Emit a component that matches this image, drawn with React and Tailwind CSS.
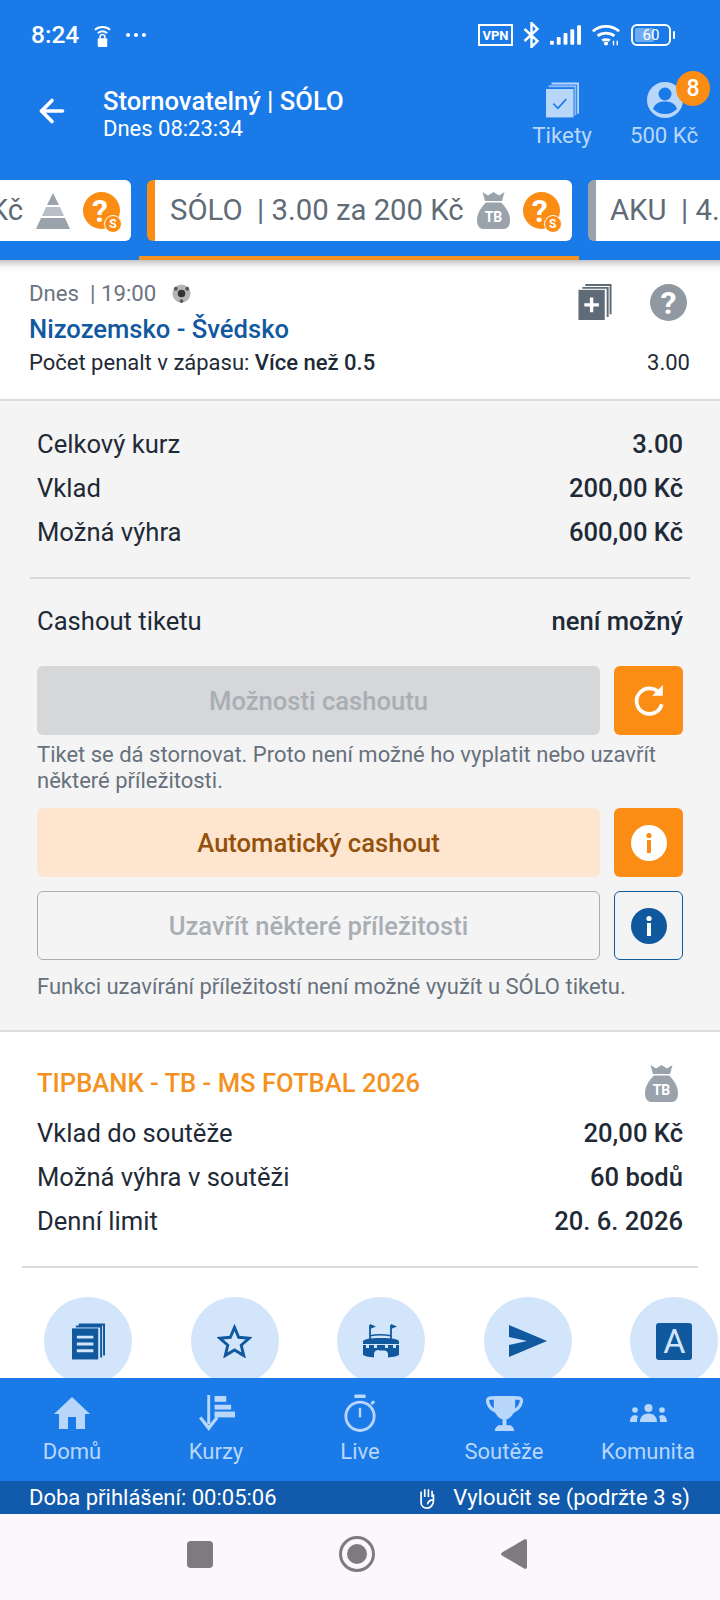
import { ArrowLeft } from "lucide-react";

const font = { fontFamily: "Roboto, sans-serif" };

function MoneyBag({ className }) {
  return (
    <svg viewBox="0 0 33 37" className={className}>
      <path d="M5.500 0l5.500 3.500L16.500 0 22 3.500 27.500 0 25 9H8z" fill="currentColor" />
      <path d="M9 10.500h15c3 3 9 9 9 18 0 6-3 8.500-7 8.500H7c-4 0-7-2.500-7-8.500 0-9 6-15 9-18z" fill="currentColor" />
      <text x="16.500" y="30" textAnchor="middle" fontSize="14" fontWeight="700" fill="#fff" fontFamily="Roboto, sans-serif">TB</text>
    </svg>
  );
}

function HelpCoin() {
  return (
    <div className="relative flex h-[37px] w-[37px] shrink-0 items-center justify-center rounded-full bg-[#fb8c14] pr-[3px] text-[32px] font-bold leading-none text-white">
      ?
      <span className="absolute -bottom-[4px] -right-[2px] flex h-[18px] w-[18px] items-center justify-center rounded-full border border-white bg-[#fb8c14] text-[12px] font-bold leading-none text-white">S</span>
    </div>
  );
}

function InfoDot({ bg, fg }) {
  return (
    <svg viewBox="0 0 36 36" className="h-[36px] w-[36px]">
      <circle cx="18" cy="18" r="18" fill={bg} />
      <circle cx="18" cy="10.500" r="2.600" fill={fg} />
      <rect x="16" y="15" width="4" height="13" fill={fg} />
    </svg>
  );
}

function StatusBar() {
  return (
    <div className="flex h-[70px] shrink-0 items-center justify-between pl-[31px] pr-[45px] text-white">
      <div className="flex items-center gap-[14px]">
        <span className="text-[24.500px] font-medium leading-none">8:24</span>
        <svg viewBox="0 0 20 24" className="h-[23px] w-[19px]" fill="none" stroke="currentColor" strokeWidth="2">
          <path d="M2 6c4-4 12-4 16 0M5 9.500c3-2.500 7-2.500 10 0" />
          <rect x="5" y="15" width="10" height="9" rx="1" fill="currentColor" stroke="none" />
          <path d="M7.500 15v-1.500a2.500 2.500 0 0 1 5 0V15" strokeWidth="1.600" />
        </svg>
        <span className="flex gap-[4px]">
          <i className="h-[4px] w-[4px] rounded-full bg-white" />
          <i className="h-[4px] w-[4px] rounded-full bg-white" />
          <i className="h-[4px] w-[4px] rounded-full bg-white" />
        </span>
      </div>
      <div className="flex items-center gap-[10px]">
        <span className="flex h-[22px] w-[35px] items-center justify-center border-2 border-white text-[13px] font-bold leading-none">VPN</span>
        <svg viewBox="0 0 16 26" className="h-[26px] w-[17px]" fill="none" stroke="currentColor" strokeWidth="2.400">
          <path d="M1 7l13 12-6 6V1l6 6L1 19" />
        </svg>
        <svg viewBox="0 0 32 22" className="h-[22px] w-[31px]" fill="currentColor">
          <rect x="0" y="17" width="4" height="4" rx="1" />
          <rect x="7" y="13" width="4" height="8" rx="1" />
          <rect x="14" y="9" width="4" height="12" rx="1" />
          <rect x="21" y="5" width="4" height="16" rx="1" />
          <rect x="28" y="1" width="4" height="20" rx="1" />
        </svg>
        <svg viewBox="0 0 32 24" className="h-[24px] w-[30px]" fill="none" stroke="currentColor" strokeWidth="3">
          <path d="M2 8c8-7 20-7 28 0M7 13c5-4 13-4 18 0M12 18c2-1.500 6-1.500 8 0" />
          <circle cx="16" cy="21" r="2.200" fill="currentColor" stroke="none" />
          <path d="M24 18v5M28 18v5" strokeWidth="1.500" />
        </svg>
        <div className="flex items-center gap-[2px]">
          <div className="relative flex h-[22px] w-[40px] items-center justify-center overflow-hidden rounded-[6px] border-2 border-white text-[15px] leading-none">
            <span className="absolute inset-y-[2px] left-[2px] w-[19px] rounded-[2px] bg-[#a6cdf8]/60" />
            <span className="relative">60</span>
          </div>
          <i className="h-[8px] w-[2px] rounded-full bg-white" />
        </div>
      </div>
    </div>
  );
}

function Header() {
  return (
    <div className="flex h-[96px] shrink-0 items-start pl-[34px] pr-[20px] text-white">
      <ArrowLeft className="mt-[23px] h-[36px] w-[36px]" strokeWidth={2.400} />
      <div className="ml-[33px] mt-[17px] flex-1">
        <div className="text-[25.600px] font-medium leading-[28px]">Stornovatelný | SÓLO</div>
        <div className="text-[22px] leading-[28px]">Dnes 08:23:34</div>
      </div>
      <div className="flex w-[72px] flex-col items-center text-[#b9d7fb]">
        <svg viewBox="0 0 36 38" className="mt-[12px] h-[36px] w-[33px]">
          <path d="M6 0h30v34h-2V2H6z" fill="currentColor" />
          <path d="M3 3h30v33h-2V5H3z" fill="currentColor" opacity=".7" />
          <rect x="0" y="7" width="30" height="31" fill="currentColor" />
          <path d="M8 23l5 5 9-10" stroke="#1a7ae8" strokeWidth="1.800" fill="none" />
        </svg>
        <span className="mt-[3px] text-[22.400px] leading-[28px]">Tikety</span>
      </div>
      <div className="relative ml-[30px] flex w-[72px] flex-col items-center text-[#b9d7fb]">
        <svg viewBox="0 0 36 36" className="ml-[2px] mt-[12px] h-[36px] w-[36px]">
          <circle cx="18" cy="18" r="18" fill="currentColor" />
          <circle cx="18" cy="12" r="6.500" fill="#1a7ae8" />
          <path d="M6 27c2-6 7-7.500 12-7.500s10 1.500 12 7.500c-3 3-7 5-12 5s-9-2-12-5z" fill="#1a7ae8" />
        </svg>
        <span className="absolute left-[48px] top-[1px] flex h-[35px] w-[34px] items-center justify-center rounded-full bg-[#fb8c14] text-[23px] font-medium leading-none text-white">8</span>
        <span className="mt-[3px] text-[22.200px] leading-[28px]">500 Kč</span>
      </div>
    </div>
  );
}

function Tabs() {
  return (
    <div className="flex h-[94px] shrink-0 items-start gap-[16px] overflow-hidden">
      <div className="mt-[14px] flex h-[61px] w-[131px] shrink-0 items-center justify-end gap-[12px] overflow-hidden rounded-r-[6px] bg-white pr-[11px] text-[29.300px] leading-none text-[#5f6b76]">
        <span className="shrink-0">Kč</span>
        <svg viewBox="0 0 36 36" className="h-[36px] w-[36px] shrink-0" fill="#9aa3ac">
          <path d="M18 0l6 12H12z" />
          <path d="M11 14h14l4 9H7z" opacity=".7" />
          <path d="M6 25h24l5 11H1z" />
        </svg>
        <HelpCoin />
      </div>
      <div className="relative h-[94px] shrink-0">
        <div className="mt-[14px] flex h-[61px] w-[425px] items-center overflow-hidden rounded-[6px] border-l-[8px] border-[#fb8c14] bg-white pl-[15px] text-[29.300px] leading-none text-[#5f6b76]">
          <span className="whitespace-pre">SÓLO  | 3.00 za 200 Kč</span>
          <MoneyBag className="ml-[13px] h-[37px] w-[33px] shrink-0 text-[#9aa3ac]" />
          <span className="ml-[13px]"><HelpCoin /></span>
        </div>
        <div className="absolute bottom-0 -left-[8px] -right-[7px] h-[4px] bg-[#f5911e]" />
      </div>
      <div className="mt-[14px] flex h-[61px] flex-1 items-center overflow-hidden whitespace-pre rounded-l-[6px] border-l-[8px] border-[#9aa3ac] bg-white pl-[14px] text-[29.300px] leading-none text-[#5f6b76]">
        AKU  | 4.
      </div>
    </div>
  );
}

function Row({ label, value }) {
  return (
    <div className="flex h-[44px] items-center justify-between text-[25.600px] text-[#1f2a37]">
      <span>{label}</span>
      <span className="font-medium">{value}</span>
    </div>
  );
}

function ActionRow({ left, icon, iconClass }) {
  return (
    <div className="flex gap-[14px]">
      {left}
      <div className={"flex h-[69px] w-[69px] shrink-0 items-center justify-center rounded-[6px] " + iconClass}>{icon}</div>
    </div>
  );
}

function Ticket() {
  return (
    <div className="relative shrink-0 border-b-2 border-[#dcdcdc] bg-white pb-[21px] pl-[29px] pr-[30px] pt-[20px] shadow-[inset_0_10px_8px_-8px_rgba(0,0,0,0.35)]">
      <div className="flex h-[26px] items-center text-[22.200px] leading-none text-[#6b7480]">
        <span className="whitespace-pre">Dnes  | 19:00</span>
        <svg viewBox="0 0 20 20" className="ml-[16px] h-[19px] w-[19px]">
          <circle cx="10" cy="10" r="9.500" fill="#b5b5b5" />
          <circle cx="10" cy="10" r="4" fill="#333" />
          <circle cx="4" cy="5" r="2" fill="#555" />
          <circle cx="16" cy="5" r="2" fill="#555" />
          <circle cx="10" cy="18" r="2" fill="#555" />
        </svg>
      </div>
      <div className="mt-[6px] text-[25.600px] font-medium leading-[34px] text-[#11599f]">Nizozemsko - Švédsko</div>
      <div className="mt-[2px] flex items-center justify-between text-[22px] leading-[30px] text-[#1f2a37]">
        <span>Počet penalt v zápasu: <span className="font-medium">Více než 0.5</span></span>
        <span>3.00</span>
      </div>
      <div className="absolute right-[33px] top-[24px] flex items-start gap-[38px]">
        <svg viewBox="0 0 34 37" className="h-[36px] w-[34px]">
          <path d="M7 0h27v31h-2V2H7zM4 3h27v31h-2V5H4z" fill="#5f6b76" />
          <rect x="0" y="6" width="27" height="31" fill="#5f6b76" />
          <path d="M13.500 14v15M6 21.500h15" stroke="#fff" strokeWidth="3.500" />
        </svg>
        <div className="flex h-[37px] w-[37px] items-center justify-center rounded-full bg-[#9098a1] text-[32px] font-bold leading-none text-white">?</div>
      </div>
    </div>
  );
}

function Cashout() {
  return (
    <div className="shrink-0 border-b-2 border-[#dcdcdc] bg-[#f4f4f5] px-[37px] pt-[21px]">
      <Row label="Celkový kurz" value="3.00" />
      <Row label="Vklad" value="200,00 Kč" />
      <Row label="Možná výhra" value="600,00 Kč" />
      <div className="-mx-[7px] mt-[23px] h-[2px] bg-[#d9d9d9]" />
      <div className="mt-[20px]"><Row label="Cashout tiketu" value="není možný" /></div>
      <div className="mt-[23px]">
        <ActionRow
          iconClass="bg-[#fb8c14]"
          icon={
            <svg viewBox="0 0 32 32" className="h-[34px] w-[34px]" fill="none" stroke="#fff" strokeWidth="3.500">
              <path d="M26 9A12 12 0 1 0 28 19" />
              <path d="M19 11h10V1z" fill="#fff" stroke="none" />
            </svg>
          }
          left={<div className="flex h-[69px] flex-1 items-center justify-center rounded-[6px] bg-[#d5d7d9] pt-[2px] text-[25.600px] font-medium text-[#a9aeb4]">Možnosti cashoutu</div>}
        />
      </div>
      <p className="mt-[7px] text-[22px] leading-[26px] text-[#67717c]">Tiket se dá stornovat. Proto není možné ho vyplatit nebo uzavřít některé příležitosti.</p>
      <div className="mt-[14px]">
        <ActionRow
          iconClass="bg-[#fb8c14]"
          icon={<InfoDot bg="#fff" fg="#fb8c14" />}
          left={<div className="flex h-[69px] flex-1 items-center justify-center rounded-[6px] bg-[#fee5cf] pt-[2px] text-[25.600px] font-medium text-[#93510c]">Automatický cashout</div>}
        />
      </div>
      <div className="mt-[14px]">
        <ActionRow
          iconClass="border border-[#11599f]"
          icon={<InfoDot bg="#11599f" fg="#fff" />}
          left={<div className="flex h-[69px] flex-1 items-center justify-center rounded-[6px] border border-[#a9aeb4] pt-[2px] text-[25.600px] font-medium text-[#a9aeb4]">Uzavřít některé příležitosti</div>}
        />
      </div>
      <p className="mt-[14px] pb-[30px] text-[22px] leading-[26px] text-[#67717c]">Funkci uzavírání příležitostí není možné využít u SÓLO tiketu.</p>
    </div>
  );
}

function QuickCircle({ children }) {
  return <div className="flex h-[88px] w-[88px] shrink-0 items-center justify-center rounded-full bg-[#d2e5fa] text-[#11599f]">{children}</div>;
}

function Tipbank() {
  return (
    <div className="bg-white">
      <div className="px-[37px] pt-[30px]">
        <div className="flex h-[42px] items-center justify-between">
          <span className="text-[25.600px] font-medium text-[#f5911e]">TIPBANK - TB - MS FOTBAL 2026</span>
          <MoneyBag className="mr-[5px] h-[37px] w-[33px] text-[#9aa3ac]" />
        </div>
        <div className="mt-[7px]">
          <Row label="Vklad do soutěže" value="20,00 Kč" />
          <Row label="Možná výhra v soutěži" value="60 bodů" />
          <Row label="Denní limit" value="20. 6. 2026" />
        </div>
      </div>
      <div className="mx-[22px] mt-[23px] h-[2px] bg-[#dcdcdc]" />
      <div className="ml-[44px] mt-[29px] flex gap-[58.600px]">
        <QuickCircle>
          <svg viewBox="0 0 34 37" className="h-[37px] w-[33px]" fill="currentColor">
            <path d="M7 0h27v33h-2V2H7zM4 2h27v33h-2V4H4z" />
            <rect x="0" y="5" width="27" height="32" />
            <path d="M5 14h17M5 21h17M5 28h17" stroke="#d2e5fa" strokeWidth="3" />
          </svg>
        </QuickCircle>
        <QuickCircle>
          <svg viewBox="0 0 36 34" className="h-[34px] w-[35px]" fill="none" stroke="currentColor" strokeWidth="3">
            <path d="M18 3l4.300 10.200 11 .9-8.400 7.200 2.600 10.700L18 26.300 8.500 32l2.600-10.700-8.400-7.200 11-.9z" />
          </svg>
        </QuickCircle>
        <QuickCircle>
          <svg viewBox="0 0 36 34" className="h-[34px] w-[36px]" fill="currentColor">
            <path d="M7 1v14M28 1v14" stroke="currentColor" strokeWidth="1.800" />
            <path d="M7 0l6 2.500L7 5zM28 0l6 2.500L28 5z" />
            <path d="M7 11c7-1.200 14-1.200 21 0v1.500c-7-1.200-14-1.200-21 0z" />
            <path d="M0 17c2-2 6-3 18-3s16 1 18 3v3H0z" />
            <path d="M0 21h3v3h3v-3h5v3h3v-3h8v3h3v-3h5v3h3v-3h3v10c-3 1.500-6 2-11 2.500V30a4 4 0 0 0-4-3.500h-4A4 4 0 0 0 11 30v3.500C6 33 3 32.500 0 31z" />
          </svg>
        </QuickCircle>
        <QuickCircle>
          <svg viewBox="0 0 38 32" className="h-[32px] w-[38px]" fill="currentColor">
            <path d="M0 0l38 16L0 32V20l18-4L0 12z" />
          </svg>
        </QuickCircle>
        <QuickCircle>
          <div className="flex h-[37px] w-[36px] items-center justify-center rounded-[3px] bg-[#11599f] text-[34px] leading-none text-[#d2e5fa]">A</div>
        </QuickCircle>
      </div>
    </div>
  );
}

function NavItem({ label, children }) {
  return (
    <div className="flex flex-1 flex-col items-center">
      <div className="flex h-[40px] items-center justify-center">{children}</div>
      <span className="mt-[5px] text-[22px] leading-[28px]">{label}</span>
    </div>
  );
}

function BottomNav() {
  return (
    <div className="flex h-[103px] shrink-0 items-start bg-[#1a7ae8] pt-[15px] text-[#b9d7fb]">
      <NavItem label="Domů">
        <svg viewBox="0 0 36 32" className="h-[32px] w-[36px]" fill="currentColor">
          <path d="M18 0l18 17h-5v15H22V20h-8v12H5V17H0z" />
        </svg>
      </NavItem>
      <NavItem label="Kurzy">
        <svg viewBox="0 0 38 38" className="h-[37px] w-[37px]" fill="currentColor">
          <path d="M9.500 0h3v30h-3z" />
          <path d="M1 24l10 13 10-13-2.500-2L11 31 3.500 22z" />
          <rect x="17" y="1" width="12" height="6" />
          <rect x="17" y="10" width="17" height="5" />
          <rect x="17" y="17" width="21" height="6" />
        </svg>
      </NavItem>
      <NavItem label="Live">
        <svg viewBox="0 0 36 40" className="h-[39px] w-[34px]" fill="none" stroke="currentColor" strokeWidth="3">
          <rect x="12" y="0" width="12" height="3.500" rx="1" fill="currentColor" stroke="none" />
          <circle cx="18" cy="23" r="15" />
          <path d="M18 14v10" strokeWidth="2.500" />
          <path d="M30 10l3-3" />
        </svg>
      </NavItem>
      <NavItem label="Soutěže">
        <svg viewBox="0 0 38 38" className="h-[37px] w-[37px]" fill="currentColor">
          <path d="M8 1h22v10c0 8-5 13-9 14v6h4c2 1 4 3 4 6H9c0-3 2-5 4-6h4v-6c-4-1-9-6-9-14z" />
          <path d="M9 3H5C2 3 1 5 2 8c1 4 4 7 9 9M29 3h4c3 0 4 2 3 5-1 4-4 7-9 9" fill="none" stroke="currentColor" strokeWidth="3.500" />
        </svg>
      </NavItem>
      <NavItem label="Komunita">
        <svg viewBox="0 0 37 18" className="h-[18px] w-[37px]" fill="currentColor">
          <circle cx="18.500" cy="4" r="4" />
          <circle cx="5" cy="6" r="2.800" />
          <circle cx="32" cy="6" r="2.800" />
          <path d="M10 18c0-5 3-8.500 8.500-8.500S27 13 27 18z" />
          <path d="M0 18c0-4 2-7 5-7l3 1c-1 2-1 4-1 6zM37 18c0-4-2-7-5-7l-3 1c1 2 1 4 1 6z" />
        </svg>
      </NavItem>
    </div>
  );
}

function SessionBar() {
  return (
    <div className="flex h-[33px] shrink-0 items-center justify-between bg-[#125aab] pl-[29px] pr-[30px] text-[22px] leading-none text-white">
      <span>Doba přihlášení: 00:05:06</span>
      <span className="flex items-center gap-[17px]">
        <svg viewBox="0 0 18 24" className="h-[22px] w-[17px]" fill="none" stroke="currentColor" strokeWidth="1.800">
          <path d="M2 12V5M6 11V2.500M10 11V2.500M14 11V4M2 11v6c0 4 3 6 6.500 6s7-3 7-8V8M9 19c.500-3 3-5 6.500-5" />
        </svg>
        Vyloučit se (podržte 3 s)
      </span>
    </div>
  );
}

function SystemNav() {
  return (
    <div className="flex h-[86px] shrink-0 items-center bg-[#fcf7fd] pb-[6px]">
      <div className="ml-[187px] h-[27px] w-[26px] rounded-[4px] bg-[#7d7a80]" />
      <div className="ml-[126px] flex h-[36px] w-[36px] items-center justify-center rounded-full border-[3px] border-[#7d7a80]">
        <div className="h-[20px] w-[20px] rounded-full bg-[#7d7a80]" />
      </div>
      <svg viewBox="0 0 26 30" className="ml-[126px] h-[30px] w-[26px]" fill="#7d7a80">
        <path d="M24 0a2 2 0 0 1 2 2v26a2 2 0 0 1-2 2L1 16.500a2 2 0 0 1 0-3z" />
      </svg>
    </div>
  );
}

export default function App() {
  return (
    <div className="flex h-[1600px] w-[720px] flex-col overflow-hidden bg-white" style={font}>
      <div className="shrink-0 bg-[#1a7ae8]">
        <StatusBar />
        <Header />
        <Tabs />
      </div>
      <div className="min-h-0 flex-1 overflow-hidden">
        <Ticket />
        <Cashout />
        <Tipbank />
      </div>
      <BottomNav />
      <SessionBar />
      <SystemNav />
    </div>
  );
}
